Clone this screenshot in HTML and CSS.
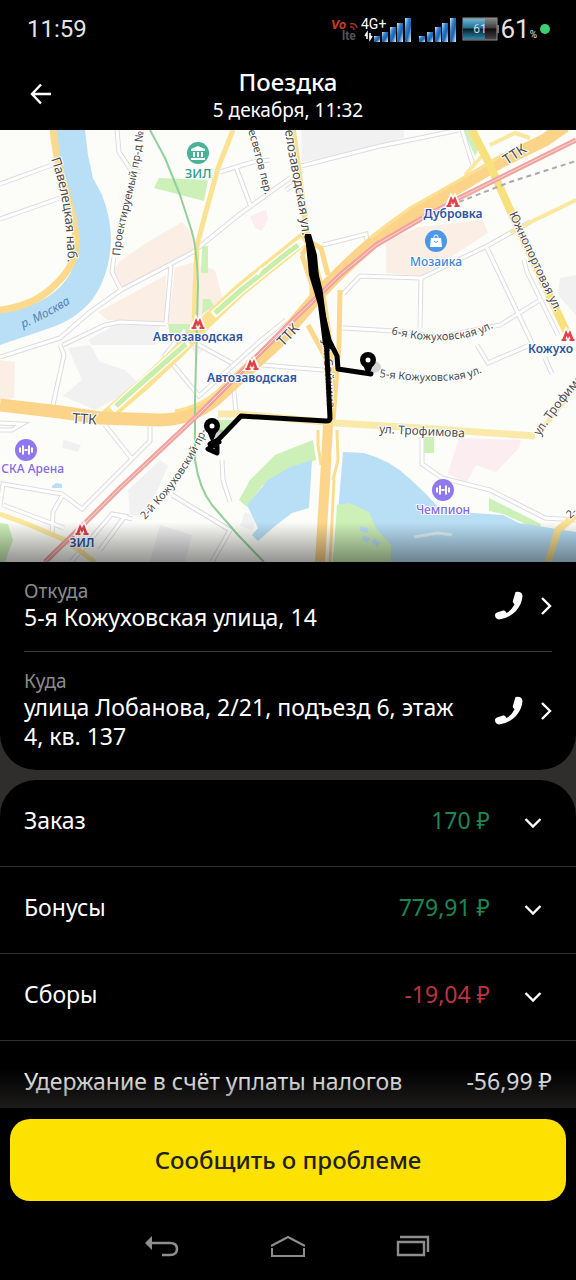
FILE: index.html
```html
<!DOCTYPE html>
<html lang="ru">
<head>
    <meta charset="UTF-8">
    <meta name="viewport" content="width=device-width, initial-scale=1.0">
    <title>Поездка</title>
    <link rel="stylesheet" href="styles.css">
</head>
<body>
    <div class="status-bar">
        <span class="clock">11:59</span>
        <div class="status-icons">
            <svg class="network" width="132" height="28" viewBox="330 14 132 28" aria-hidden="true">
                <defs>
                    <linearGradient id="bar" x1="0" y1="0" x2="1" y2="1">
                        <stop offset="0" stop-color="#cfe6fa"/>
                        <stop offset="0.35" stop-color="#2f7fc8"/>
                        <stop offset="0.6" stop-color="#1b62ab"/>
                        <stop offset="1" stop-color="#e4f2fd"/>
                    </linearGradient>
                    <g id="bars" fill="url(#bar)">
                        <rect x="0" y="18" width="6" height="6"/>
                        <rect x="8" y="14" width="6" height="10"/>
                        <rect x="16" y="9" width="6" height="15"/>
                        <rect x="23" y="5" width="6" height="19"/>
                        <rect x="31" y="0" width="6" height="24"/>
                    </g>
                </defs>
                <text class="vo" x="331" y="28">Vo</text>
                <text class="lte" x="342" y="39">lte</text>
                <path d="M350 23a5 5 0 0 1 7 4M350 26a3 3 0 0 1 4 3" fill="none" stroke="#a33326" stroke-width="1.5"/>
                <text class="net" x="361" y="28">4G+</text>
                <path d="M367 38v-6l-2 3M370 32v6l2-3" fill="none" stroke="#fff" stroke-width="1.6"/>
                <use href="#bars" x="374" y="17"/>
                <use href="#bars" x="419" y="17"/>
            </svg>
            <svg class="battery" width="38" height="24" viewBox="0 0 38 24" aria-hidden="true">
                <defs>
                    <linearGradient id="cell" x1="0" y1="0" x2="0" y2="1">
                        <stop offset="0" stop-color="#6bb4d2"/>
                        <stop offset="0.45" stop-color="#1f6f98"/>
                        <stop offset="0.5" stop-color="#0a1a22"/>
                        <stop offset="1" stop-color="#2a86b0"/>
                    </linearGradient>
                    <linearGradient id="shell" x1="0" y1="0" x2="0" y2="1">
                        <stop offset="0" stop-color="#8a8a8a"/>
                        <stop offset="0.45" stop-color="#3c3c3c"/>
                        <stop offset="0.5" stop-color="#0c0c0c"/>
                        <stop offset="1" stop-color="#4c4648"/>
                    </linearGradient>
                </defs>
                <rect x="1" y="1" width="34" height="22" fill="url(#shell)" stroke="#8b8f92"/>
                <rect x="1" y="2" width="22" height="20" fill="url(#cell)"/>
                <rect x="35" y="8" width="2" height="8" fill="#777"/>
                <text class="cell-text" x="18" y="16" text-anchor="middle">61</text>
            </svg>
            <span class="percent">61<small>%</small></span>
            <span class="dot"></span>
        </div>
    </div>

    <header class="header">
        <button class="back" aria-label="Назад">
            <svg width="22" height="22" viewBox="0 0 22 22"><path d="M11 1.5L2 11l9 9.5M2 11h19" fill="none" stroke="#fff" stroke-width="2.4"/></svg>
        </button>
        <div class="header-text">
            <h1>Поездка</h1>
            <p>5 декабря, 11:32</p>
        </div>
    </header>

    <main class="content">
        <svg class="map" viewBox="0 130 576 432" role="img" aria-label="Маршрут поездки">
            <defs>
                <linearGradient id="fade" x1="0" y1="0" x2="0" y2="1">
                    <stop offset="0" stop-color="#000" stop-opacity="0"/>
                    <stop offset="1" stop-color="#000" stop-opacity="0.42"/>
                </linearGradient>
                <path id="streets" d="M0 184L52 165M0 219L60 198M117 130L119 152L131 170L141 172M114 257L112 272L121 290M290 178L240 214L193 252L167 266L121 290L90 312L60 338L0 357M171 266L166 323M63 345L105 325L120 322L166 324M220 172L253 162L270 160M236 167L251 207M301 166L380 146L420 138L458 130M301 180L286 190M462 130L473 165M323 245L366 234L367 240M343 294L360 276L421 278L487 246L530 222M421 278L420 328M343 328L395 331M486 246L533 345M524 260L527 272L558 335M395 331L440 337L500 325L540 300M477 345L488 363L530 345M545 358L552 374M185 330L165 355L199 396L258 343L286 320M199 345L232 363M262 365L335 371M232 372L236 412M60 345L64 355L53 405M105 425L132 459L82 509L62 494L3 484L0 505M150 425L150 441L132 459M62 496L53 512L52 535M3 505L64 528M71 562L112 514L125 516L100 550M132 519L112 514M172 495L230 530L212 562M222 460L223 480L230 502M422 437L422 464L442 478L490 490L545 518L576 520M88 520L45 562M0 423L22 424L12 430L0 430"/>
                <path id="p1" d="M51 159C60 185 68 215 68 280"/>
                <path id="p2" d="M23 328Q52 316 80 297"/>
                <path id="p3" d="M120 256C123 215 141 180 144 122"/>
                <path id="p4" d="M248 131Q256 155 267 205"/>
                <path id="p5" d="M285 130C290 170 298 190 304 250"/>
                <path id="p6" d="M509 214Q530 260 558 318"/>
                <path id="p7" d="M391 334Q430 344 463 338Q480 336 500 324"/>
                <path id="p8" d="M379 377Q430 384 462 379Q475 377 492 367"/>
                <path id="p9" d="M379 433L480 438"/>
                <path id="p10" d="M540 436Q557 408 600 360"/>
                <path id="p11" d="M145 520C165 498 188 475 210 424"/>
                <path id="p12" d="M283 347L310 319"/>
                <path id="p13" d="M507 165L540 143"/>
                <path id="p14" d="M323 340L328 425"/>
            </defs>

            <rect x="0" y="130" width="576" height="432" fill="#fcfdf8"/>

            <!-- blocks -->
            <g fill="#f1f1f2">
                <path d="M301 130H404V137L380 146L302 162Z"/>
                <path d="M68 348L90 345L100 362L125 370L140 385L95 410L63 396L82 380Z"/>
                <path d="M128 490L160 460L168 466L145 518L130 515Z"/>
                <path d="M63 440L81 445L78 452L62 448Z"/>
                <path d="M88 340L115 325H160L155 345H92Z"/>
                <path d="M576 275L560 278L558 295L576 315Z"/>
                <path d="M160 525L192 535L185 562H150Z"/>
                <path d="M245 512L258 518L252 530L240 526Z"/>
            </g>
            <g fill="#fbeee5">
                <path d="M119 262L143 245L182 222L192 233L193 250L167 265L121 288L112 274Z"/>
                <path d="M98 312L166 275L165 322L107 320Z"/>
                <path d="M175 268L193 262L215 270L222 297L205 324H168Z"/>
                <path d="M386 240L419 227L483 220L488 233L421 276L386 273Z"/>
                <path d="M0 360L15 362L14 398L0 400Z"/>
            </g>
            <g fill="#fcedf0">
                <path d="M250 216L266 210L268 219L262 231L255 228Z"/>
                <path d="M459 438L521 440L519 448L496 472L476 465L466 484L448 473Z"/>
                <path d="M190 345H208L196 357Z"/>
            </g>
            <g fill="#cdf0b8">
                <path d="M159 178L208 180L204 201L154 188Z"/>
                <path d="M202 246H208V273H201Z"/>
                <path d="M203 299H210L214 306L202 314Z"/>
                <path d="M168 324H190V335H170Z"/>
                <path d="M463 130H473L480 147L475 156Z"/>
                <path d="M424 437H434V453H424Z"/>
                <path d="M489 498L541 524L539 530L503 514L489 511Z"/>
                <path d="M214 420L236 420L222 436Z"/>
                <path d="M313 440L275 455L250 480L239 500L247 507L262 486L290 469L316 460Z"/>
                <path d="M0 523L8 524L13 540L5 562H0Z"/>
            </g>

            <!-- water -->
            <g fill="#b9dff6">
                <path d="M56 130H85L88 155L93 178L102 195Q111 218 111 240Q110 275 92 300Q75 320 50 328L0 345V311Q45 308 66 280Q84 258 72 205Q66 175 58 155Z"/>
                <path d="M312 460L290 467L268 480L247 505L258 528L252 535L258 541L275 526L292 513L309 508Z"/>
                <path d="M343 452L364 453Q390 460 409 478L424 492L439 508L473 513L503 515L519 523L576 532V562H333L339 500Z"/>
                <path d="M52 486L56 483L62 484V488H52Z"/>
            </g>
            <path d="M337 505L349 503L369 512L376 528L391 545V562H333Z" fill="#cdf0b8"/>
            <path d="M360 528l8 3M363 537l6 4M373 540l6 5" stroke="#b9dff6" stroke-width="5"/>
            <path d="M414 537L438 533L452 535" fill="none" stroke="#e6f3f6" stroke-width="3"/>

            <!-- small streets -->
            <use href="#streets" fill="none" stroke="#dcdce0" stroke-width="5"/>
            <use href="#streets" fill="none" stroke="#fff" stroke-width="3"/>

            <!-- main roads -->
            <g fill="none" stroke-linejoin="round">
                <path d="M53 130Q55 150 62 180Q76 220 76 243Q76 265 56 284Q35 306 0 310" stroke="#fcd98c" stroke-width="7"/>
                <path d="M233 130L218 168L205 215L197 246L195 290L194 325" stroke="#fbe292" stroke-width="5"/>
                <path d="M307 236L286 253L240 290L205 323L180 350L145 383L104 418" stroke="#fbe292" stroke-width="13"/>
                <path d="M303 241L286 254L240 291L213 315M188 342L145 380L112 410" stroke="#fcfdf8" stroke-width="8"/>
                <path d="M298 245L286 254L240 291L215 313M186 344L145 380L116 406" stroke="#c9edaa" stroke-width="5"/>
                <path d="M262 268l-5 7" stroke="#fcfdf8" stroke-width="3"/>
                <path d="M218 414L240 414L335 423L420 428L535 436" stroke="#fbe9aa" stroke-width="7"/>
                <path d="M538 434L576 386" stroke="#fbe9aa" stroke-width="5"/>
                <path d="M576 200L535 220L510 232M465 175L482 156M490 145L515 133L530 138" stroke="#fbe79e" stroke-width="4"/>
                <path d="M0 514L30 525L65 540L95 562" stroke="#fbe79e" stroke-width="5"/>
                <path d="M576 515L558 530L548 562" stroke="#fbe292" stroke-width="7"/>
                <path d="M321 465L318 445V430M337 430L338 460L333 480M334 480L330 562" stroke="#fbdd90" stroke-width="3"/>
                <path d="M293 130L301 190L308 240L322 290L330 345L332 380L330 425" stroke="#fbdd90" stroke-width="6"/>
                <path d="M302 255L310 242L321 248L328 275M302 255L312 285L312 300M340 290L339 345L333 420M308 325L326 358" stroke="#fbd88a" stroke-width="5"/>
                <path d="M328 425L325 480L320 562" stroke="#fcd58a" stroke-width="10"/>
                <path d="M0 405L60 412L100 418L160 420Q190 420 215 400L240 377L277 343L320 293Q370 240 410 215L450 192L500 162L545 140L565 126" stroke="#fcd489" stroke-width="13"/>
                <path d="M175 411Q200 407 222 388L252 358M370 238L410 208L500 157" stroke="#fbdf92" stroke-width="3"/>
                <path d="M472 130L490 165L511 212L540 275L568 335" stroke="#f8e07c" stroke-width="8"/>
                <path d="M150 130L165 158L180 195L192 232Q197 250 198 285L195 400V460Q199 488 212 505L238 535L264 562" stroke="#94cf9b" stroke-width="2"/>
                <path d="M576 140L459 198L419 220L376 245L340 275L286 327L200 413L120 488L83 525L45 562" stroke="#f1a3a0" stroke-width="5"/>
                <path d="M576 140L459 198L419 220L376 245L340 275L286 327L200 413L120 488L83 525L45 562" stroke="#fbd8d2" stroke-width="1"/>
                <path d="M459 202L510 182L576 161" stroke="#a9a9a9" stroke-width="2" stroke-dasharray="5 4"/>
            </g>

            <!-- street names -->
            <g class="street">
                <text class="avenue"><textPath href="#p1">Павелецкая наб.</textPath></text>
                <text><textPath href="#p3">Проектируемый пр-д №</textPath></text>
                <text><textPath href="#p4">есветов пер.</textPath></text>
                <text class="avenue"><textPath href="#p5">елозаводская ул.</textPath></text>
                <text class="big"><textPath href="#p6">Южнопортовая ул.</textPath></text>
                <text><textPath href="#p7">6-я Кожуховская ул.</textPath></text>
                <text><textPath href="#p8">5-я Кожуховская ул.</textPath></text>
                <text class="big"><textPath href="#p9">ул. Трофимова</textPath></text>
                <text class="big"><textPath href="#p10">ул. Трофимо</textPath></text>
                <text><textPath href="#p11">2-й Кожуховский пр-</textPath></text>
                <text class="ttk"><textPath href="#p12">ТТК</textPath></text>
                <text class="ttk"><textPath href="#p13">ТТК</textPath></text>
                <text class="ttk" x="72" y="423" transform="rotate(4 72 423)">ТТК</text>
                <text class="big"><textPath href="#p14">ул. Сайкина</textPath></text>
                <text x="570" y="519" transform="rotate(-40 570 519)">2-</text>
            </g>
            <text class="river"><textPath href="#p2">р. Москва</textPath></text>

            <!-- stations -->
            <g class="station">
                <text x="198" y="341">Автозаводская</text>
                <text x="252" y="382">Автозаводская</text>
                <text x="453" y="218">Дубровка</text>
                <text x="82" y="547">ЗИЛ</text>
                <text class="from-left" x="528" y="353">Кожухо</text>
            </g>
            <g>
                <g id="m">
                    <path d="M192 328L196 319L198 323L200 319L204 328Z" fill="none" stroke="#fff" stroke-width="4"/>
                    <path d="M191.5 329V327H192.5L196 318L198 322L200 318L203.5 327H204.5V329H199.5V327H200.5L199.500 324L198 327L196.500 324L195.500 327H196.500V329Z" fill="#e5404a"/>
                </g>
                <use href="#m" x="54" y="41"/>
                <use href="#m" x="255" y="-122"/>
                <use href="#m" x="-116" y="206"/>
                <use href="#m" x="370" y="12"/>
            </g>

            <!-- places -->
            <g class="place">
                <circle cx="198" cy="153" r="11" fill="#48b399"/>
                <path d="M191 151v-2l7-3 7 3v2zM193 152h2v5h-2zM197 152h2v5h-2zM201 152h2v5h-2zM191 158h14v2h-14z" fill="#fff"/>
                <text class="zil" x="198" y="178" fill="#2c9c86">ЗИЛ</text>

                <circle cx="436" cy="241" r="11" fill="#4c98e6"/>
                <path d="M431 238h10l1 9h-12z" fill="#fff"/>
                <path d="M434 239v-2q0-2 2-2t2 2v2" fill="none" stroke="#fff"/>
                <path d="M434 241q2 3 4 0" fill="none" stroke="#4c98e6"/>
                <text x="436" y="266" fill="#3c86d8">Мозаика</text>

                <circle cx="26" cy="450" r="11" fill="#8f77f0"/>
                <path id="gym" d="M20 447.500v5M23 445.500v9M29 445.500v9M32 447.500v5M24.500 450h3" stroke="#fff" stroke-width="2"/>
                <text class="end" x="64" y="473" fill="#8069de">СКА Арена</text>

                <circle cx="443" cy="490" r="11" fill="#8f77f0"/>
                <use href="#gym" x="417" y="40"/>
                <text x="443" y="514" fill="#8069de">Чемпион</text>
            </g>

            <!-- route -->
            <g fill="none" stroke="#000" stroke-width="5" stroke-linecap="round" stroke-linejoin="round">
                <path d="M307 237L320 290L326 335L330 418Q330 421 326 421L241 416L218 440"/>
                <path d="M308 240L322 310L329 340L337 356L338 369L371 374"/>
                <path d="M219 442L208 449L217 453L217 446L210 444L218 440"/>
            </g>
            <path d="M305 234L311 234L317 255L320 290L328 335L332 350L323 345L318 305L309 275Z"/>
            <ellipse cx="373" cy="367" rx="8" ry="6" fill="#000" opacity="0.16"/>
            <ellipse cx="218" cy="434" rx="7" ry="5" fill="#000" opacity="0.16"/>
            <g id="pin">
                <circle cx="368" cy="360" r="8"/>
                <path d="M363 365L367 375H369L373 365Z"/>
                <circle cx="368" cy="360" r="2.5" fill="#fff"/>
            </g>
            <use href="#pin" x="-156" y="66"/>

            <rect x="0" y="522" width="576" height="40" fill="url(#fade)"/>
        </svg>

        <section class="route">
            <div class="point">
                <div class="point-text">
                    <h2>Откуда</h2>
                    <p>5-я Кожуховская улица, 14</p>
                </div>
                <button class="icon-button" aria-label="Позвонить">
                    <svg class="phone" width="30" height="30" viewBox="0 0 30 30"><path d="M21.5 1Q28 0 28.5 5Q28 13 22 20Q14 28 5 28.5Q1 28 1 23.5Q1.500 22 3 21.5L9 19.5Q10.5 19 11.5 20.5L12.5 22Q17 20 20.5 13.5L19.5 12Q18.5 11 19 9.5Z" fill="#fff"/></svg>
                </button>
                <button class="icon-button" aria-label="Открыть адрес">
                    <svg class="arrow" width="12" height="20" viewBox="0 0 12 20"><path d="M2 2l8 8-8 8" fill="none" stroke="#fff" stroke-width="2.4"/></svg>
                </button>
            </div>
            <div class="point">
                <div class="point-text">
                    <h2>Куда</h2>
                    <p>улица Лобанова, 2/21, подъезд 6, этаж 4, кв. 137</p>
                </div>
                <button class="icon-button" aria-label="Позвонить">
                    <svg class="phone" width="30" height="30" viewBox="0 0 30 30"><path d="M21.5 1Q28 0 28.5 5Q28 13 22 20Q14 28 5 28.5Q1 28 1 23.5Q1.500 22 3 21.5L9 19.5Q10.5 19 11.5 20.5L12.5 22Q17 20 20.5 13.5L19.5 12Q18.5 11 19 9.5Z" fill="#fff"/></svg>
                </button>
                <button class="icon-button" aria-label="Открыть адрес">
                    <svg class="arrow" width="12" height="20" viewBox="0 0 12 20"><path d="M2 2l8 8-8 8" fill="none" stroke="#fff" stroke-width="2.4"/></svg>
                </button>
            </div>
        </section>

        <section class="payments">
            <button class="row">
                <span class="name">Заказ</span>
                <span class="sum plus">170 ₽</span>
                <svg class="chevron" width="18" height="12" viewBox="0 0 18 12"><path d="M1.5 2L9 9.5L16.5 2" fill="none" stroke="#fff" stroke-width="2.4"/></svg>
            </button>
            <button class="row">
                <span class="name">Бонусы</span>
                <span class="sum plus">779,91 ₽</span>
                <svg class="chevron" width="18" height="12" viewBox="0 0 18 12"><path d="M1.5 2L9 9.5L16.5 2" fill="none" stroke="#fff" stroke-width="2.4"/></svg>
            </button>
            <button class="row">
                <span class="name">Сборы</span>
                <span class="sum minus">-19,04 ₽</span>
                <svg class="chevron" width="18" height="12" viewBox="0 0 18 12"><path d="M1.5 2L9 9.5L16.5 2" fill="none" stroke="#fff" stroke-width="2.4"/></svg>
            </button>
            <div class="row">
                <span class="name">Удержание в счёт уплаты налогов</span>
                <span class="sum">-56,99 ₽</span>
            </div>
        </section>
    </main>

    <footer class="footer">
        <button class="report">Сообщить о проблеме</button>
    </footer>

    <nav class="nav-bar">
        <button aria-label="Назад">
            <svg width="36" height="24" viewBox="0 0 36 24"><path d="M6 8H26Q33 8 33 14Q33 20 26 20H18" fill="none" stroke="#8e8e8e" stroke-width="2.5"/><path d="M1 8L8 1V15Z" fill="#8e8e8e"/></svg>
        </button>
        <button aria-label="Домой">
            <svg width="36" height="24" viewBox="0 0 36 24"><path d="M1 11L18 2L35 11M2 13V21H34V13" fill="none" stroke="#8e8e8e" stroke-width="2"/></svg>
        </button>
        <button aria-label="Недавние">
            <svg width="36" height="24" viewBox="0 0 36 24"><path d="M2 7H28V20H2ZM4 2H32V17" fill="none" stroke="#8e8e8e" stroke-width="2.4"/></svg>
        </button>
    </nav>
</body>
</html>
```

FILE: styles.css
```css
* {
    box-sizing: border-box;
}
body {
    margin: 0;
    height: 100vh;
    display: flex;
    flex-direction: column;
    background-color: #000;
    color: #fff;
    font-family: "Noto Sans", sans-serif;
}
h1, h2, p {
    margin: 0;
}
button {
    border: none;
    padding: 0;
    background: none;
    color: inherit;
    font-family: inherit;
    cursor: pointer;
}
svg {
    display: block;
}

/* status bar */
.status-bar {
    display: flex;
    justify-content: space-between;
    align-items: center;
    height: 58px;
    padding: 0 26px 0 27px;
    font-family: Roboto, sans-serif;
    color: #e4e4e4;
}
.clock {
    font-size: 24px;
}
.status-icons {
    display: flex;
    align-items: center;
}
.vo {
    font-size: 13px;
    font-style: italic;
    font-weight: bold;
    fill: #d03a2c;
}
.lte {
    font-size: 12px;
    font-weight: bold;
    fill: #555;
}
.net {
    font-size: 14px;
    fill: #fff;
}
.cell-text {
    font-size: 12px;
    fill: #c9dbe4;
}
.percent {
    font-size: 26px;
}
.percent small {
    font-size: 10px;
}
.dot {
    width: 10px;
    height: 10px;
    margin-left: 3px;
    border-radius: 50%;
    background-color: #3ecf6e;
}

/* header */
.header {
    display: grid;
    grid-template-columns: 1fr auto 1fr;
    align-items: center;
    height: 72px;
    padding: 0 30px;
    flex-shrink: 0;
}
.header-text {
    padding-top: 3px;
    text-align: center;
}
.header h1 {
    font-size: 24px;
    line-height: 28px;
    font-weight: 500;
}
.header p {
    font-size: 19px;
    line-height: 28px;
}

.content {
    flex: 1;
    min-height: 0;
    overflow-y: auto;
    scrollbar-width: none;
    background-color: #302e2d;
}

/* map */
.map {
    width: 100%;
    height: auto;
}
.street text {
    font-size: 11px;
    fill: #4a4a4c;
    stroke: #fff;
    stroke-width: 2px;
    paint-order: stroke;
}
.street .big {
    font-size: 12px;
}
.street .avenue {
    font-size: 13px;
}
.street .ttk {
    font-size: 14px;
}
.river {
    font-size: 12px;
    font-style: italic;
    fill: #5583b5;
}
.station text {
    font-size: 12px;
    font-weight: 600;
    text-anchor: middle;
    fill: #2c52a0;
    stroke: #fff;
    stroke-width: 2px;
    paint-order: stroke;
}
.station .from-left {
    text-anchor: start;
}
.place text {
    font-size: 12px;
    font-weight: 500;
    text-anchor: middle;
    stroke: #fff;
    stroke-width: 2px;
    paint-order: stroke;
}
.place .zil {
    font-size: 13px;
}
.place .end {
    text-anchor: end;
}

/* addresses */
.route {
    padding: 0 24px;
    background-color: #000;
    border-radius: 0 0 36px 36px;
}
.point {
    display: flex;
    align-items: center;
    padding: 18px 0 19px;
}
.point + .point {
    border-top: 1px solid #3a3a3a;
}
.point-text {
    flex: 1;
    padding-right: 32px;
}
.point h2 {
    font-size: 19px;
    line-height: 23px;
    font-weight: 400;
    color: #8c8c8c;
}
.point p {
    font-size: 23px;
    line-height: 29px;
}
.icon-button + .icon-button {
    margin-left: 16px;
}

/* payments */
.payments {
    margin-top: 10px;
    background-color: #000;
    border-radius: 36px 36px 0 0;
}
.row {
    display: flex;
    align-items: center;
    width: 100%;
    height: 87px;
    padding: 0 24px 6px;
    font-size: 23px;
    border-bottom: 1px solid #303030;
}
.name {
    flex: 1;
    text-align: left;
}
.plus {
    color: #1c8753;
}
.minus {
    color: #bb3440;
}
.chevron {
    margin: 5px 10px 0 34px;
}

/* bottom */
.footer {
    position: relative;
    padding: 11px 10px 0;
}
.footer::before {
    content: "";
    position: absolute;
    left: 0;
    right: 0;
    bottom: 100%;
    height: 40px;
    background: linear-gradient(rgba(48, 46, 45, 0), rgba(48, 46, 45, 0.6));
}
.report {
    width: 100%;
    height: 82px;
    padding-bottom: 2px;
    border-radius: 20px;
    background-color: #fde100;
    color: #21201f;
    font-size: 24px;
    font-weight: 500;
}
.nav-bar {
    display: flex;
    justify-content: center;
    gap: 90px;
    padding: 34px 0 21px;
}
```
